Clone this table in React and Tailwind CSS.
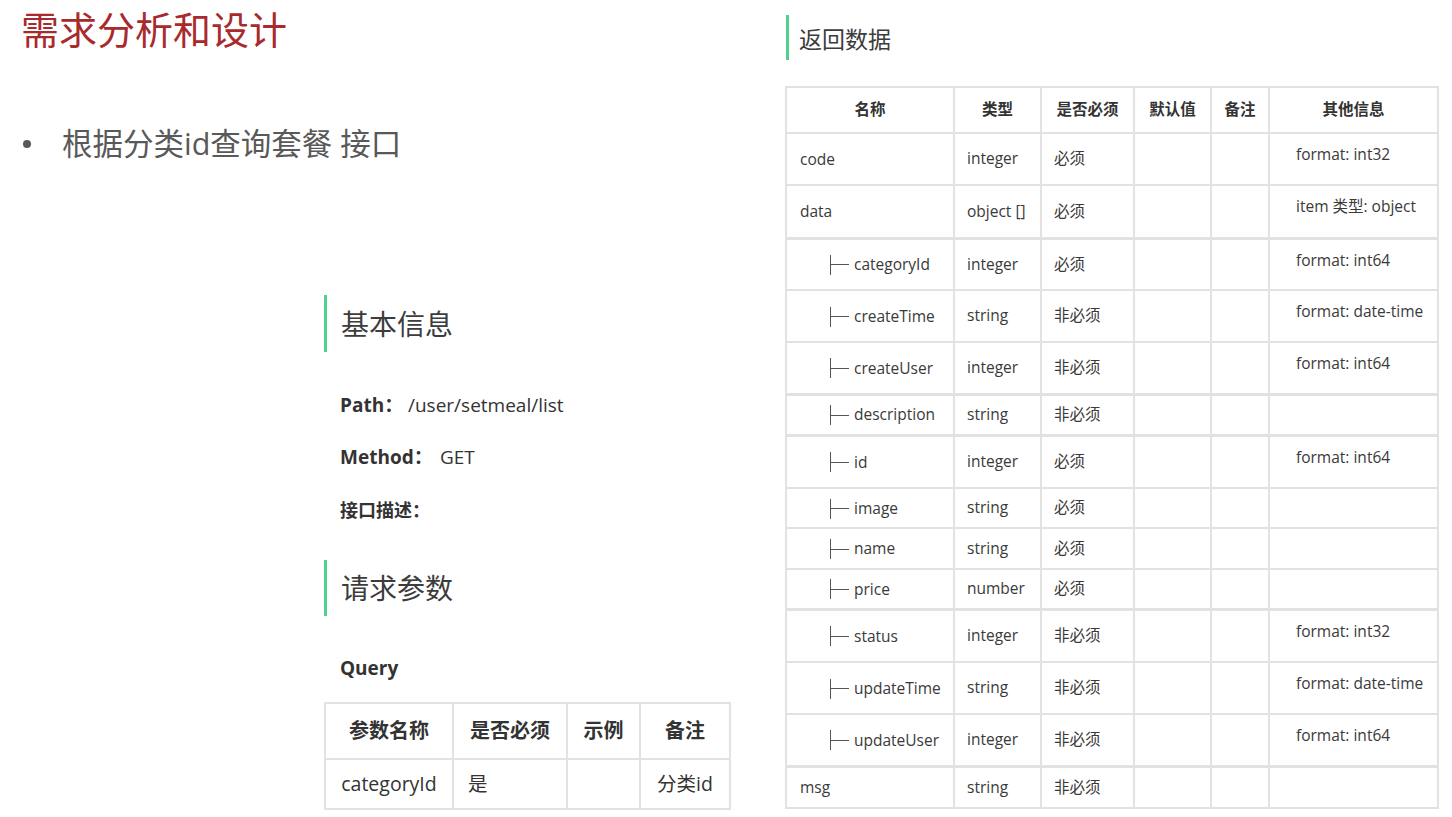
const font = { fontFamily: '"Open Sans", "Noto Sans CJK SC", sans-serif' };

const rows = [
  { name: 'code', type: 'integer', req: '必须', info: 'format: int32', h: 'h-[52px]' },
  { name: 'data', type: 'object []', req: '必须', info: 'item 类型: object', h: 'h-[53px]', thick: true },
  { name: 'categoryId', child: true, type: 'integer', req: '必须', info: 'format: int64', h: 'h-[52px]' },
  { name: 'createTime', child: true, type: 'string', req: '非必须', info: 'format: date-time', h: 'h-[52px]' },
  { name: 'createUser', child: true, type: 'integer', req: '非必须', info: 'format: int64', h: 'h-[52px]', thick: true },
  { name: 'description', child: true, type: 'string', req: '非必须', info: '', h: 'h-[41px]', thick: true },
  { name: 'id', child: true, type: 'integer', req: '必须', info: 'format: int64', h: 'h-[53px]' },
  { name: 'image', child: true, type: 'string', req: '必须', info: '', h: 'h-[40px]' },
  { name: 'name', child: true, type: 'string', req: '必须', info: '', h: 'h-[41px]' },
  { name: 'price', child: true, type: 'number', req: '必须', info: '', h: 'h-[40px]', thick: true },
  { name: 'status', child: true, type: 'integer', req: '非必须', info: 'format: int32', h: 'h-[53px]' },
  { name: 'updateTime', child: true, type: 'string', req: '非必须', info: 'format: date-time', h: 'h-[52px]' },
  { name: 'updateUser', child: true, type: 'integer', req: '非必须', info: 'format: int64', h: 'h-[52px]', thick: true },
  { name: 'msg', type: 'string', req: '非必须', info: '', h: 'h-[42px]' },
];

const SectionTitle = ({ children, className }) => (
  <div className={`flex items-center border-l-[3px] border-[#4fd18e] ${className}`}>
    {children}
  </div>
);

// tree branch mark "├─"
const Branch = () => (
  <span className="inline-flex items-center h-[20px] mr-[5px] align-middle">
    <span className="w-px h-[20px] bg-[#555]"></span>
    <span className="w-[18px] h-px bg-[#555]"></span>
  </span>
);

export default function App() {
  return (
    <div className="w-[1452px] h-[817px] bg-white flex overflow-hidden text-[#333]" style={font}>
      {/* Left column */}
      <div className="w-[785px] shrink-0 flex flex-col">
        <h1 className="pl-[21px] pt-[6px] text-[38px] leading-[46px] text-[#a82a2c] font-normal">需求分析和设计</h1>
        <div className="flex items-center mt-[72px] h-[40px] text-[30.5px] text-[#595959]">
          <span className="w-[62px] pl-[23px] flex items-center">
            <span className="w-[8px] h-[8px] rounded-full bg-[#595959]"></span>
          </span>
          <span>根据分类id查询套餐 接口</span>
        </div>

        <div className="pl-[324px] mt-[131px] flex flex-col">
          <SectionTitle className="h-[57px] pl-[14px] text-[28px] text-[#3c3c3c]">基本信息</SectionTitle>
          <div className="pl-[16px] text-[19px] text-[#333]">
            <div className="mt-[39px] h-[28px] flex items-center">
              <span className="font-bold w-[68px]">Path：</span>
              <span>/user/setmeal/list</span>
            </div>
            <div className="mt-[24px] h-[28px] flex items-center">
              <span className="font-bold w-[100px]">Method：</span>
              <span>GET</span>
            </div>
            <div className="mt-[25px] h-[28px] flex items-center font-bold text-[18px]">接口描述：</div>
          </div>
          <SectionTitle className="mt-[36px] h-[56px] pl-[14px] text-[28px] text-[#3c3c3c]">请求参数</SectionTitle>
          <div className="pl-[16px] mt-[38px] h-[28px] flex items-center text-[19px] font-bold">Query</div>
          <table className="mt-[20px] w-[405px] border-collapse text-[19.5px] table-fixed">
            <colgroup>
              <col className="w-[128px]" />
              <col className="w-[114px]" />
              <col className="w-[73px]" />
              <col className="w-[90px]" />
            </colgroup>
            <thead>
              <tr className="h-[56px]">
                {['参数名称', '是否必须', '示例', '备注'].map((t) => (
                  <th key={t} className="border-2 border-[#e2e2e2] font-bold text-center text-[20px]">{t}</th>
                ))}
              </tr>
            </thead>
            <tbody>
              <tr className="h-[50px]">
                <td className="border-2 border-[#e2e2e2] text-center">categoryId</td>
                <td className="border-2 border-[#e2e2e2] pl-[14px]">是</td>
                <td className="border-2 border-[#e2e2e2]"></td>
                <td className="border-2 border-[#e2e2e2] text-center">分类id</td>
              </tr>
            </tbody>
          </table>
        </div>
      </div>

      {/* Right column */}
      <div className="flex flex-col">
        <SectionTitle className="ml-[1px] mt-[15px] h-[45px] pl-[10px] pt-[3px] text-[23px] text-[#3c3c3c]">返回数据</SectionTitle>
        <table className="mt-[26px] w-[652px] border-collapse table-fixed text-[15.5px] text-[#3a3a3a]">
          <colgroup>
            <col className="w-[168px]" />
            <col className="w-[87px]" />
            <col className="w-[93px]" />
            <col className="w-[77px]" />
            <col className="w-[58px]" />
            <col className="w-[169px]" />
          </colgroup>
          <thead>
            <tr className="h-[46px]">
              {['名称', '类型', '是否必须', '默认值', '备注', '其他信息'].map((t) => (
                <th key={t} className="border-2 border-[#e2e2e2] font-bold text-center text-[#333]">{t}</th>
              ))}
            </tr>
          </thead>
          <tbody>
            {rows.map((r) => {
              const b = r.thick ? 'border-2 border-b-[3px] border-[#e2e2e2]' : 'border-2 border-[#e2e2e2]';
              return (
                <tr key={r.name} className={r.h}>
                  <td className={`${b} ${r.child ? 'pl-[43px]' : 'pl-[13px]'} whitespace-nowrap`}>
                    {r.child && <Branch />}
                    <span className="align-middle">{r.name}</span>
                  </td>
                  <td className={`${b} pl-[12px] whitespace-nowrap`}>{r.type}</td>
                  <td className={`${b} pl-[12px]`}>{r.req}</td>
                  <td className={b}></td>
                  <td className={b}></td>
                  <td className={`${b} align-top pl-[26px] pt-[9px] whitespace-nowrap`}>{r.info}</td>
                </tr>
              );
            })}
          </tbody>
        </table>
      </div>
    </div>
  );
}
